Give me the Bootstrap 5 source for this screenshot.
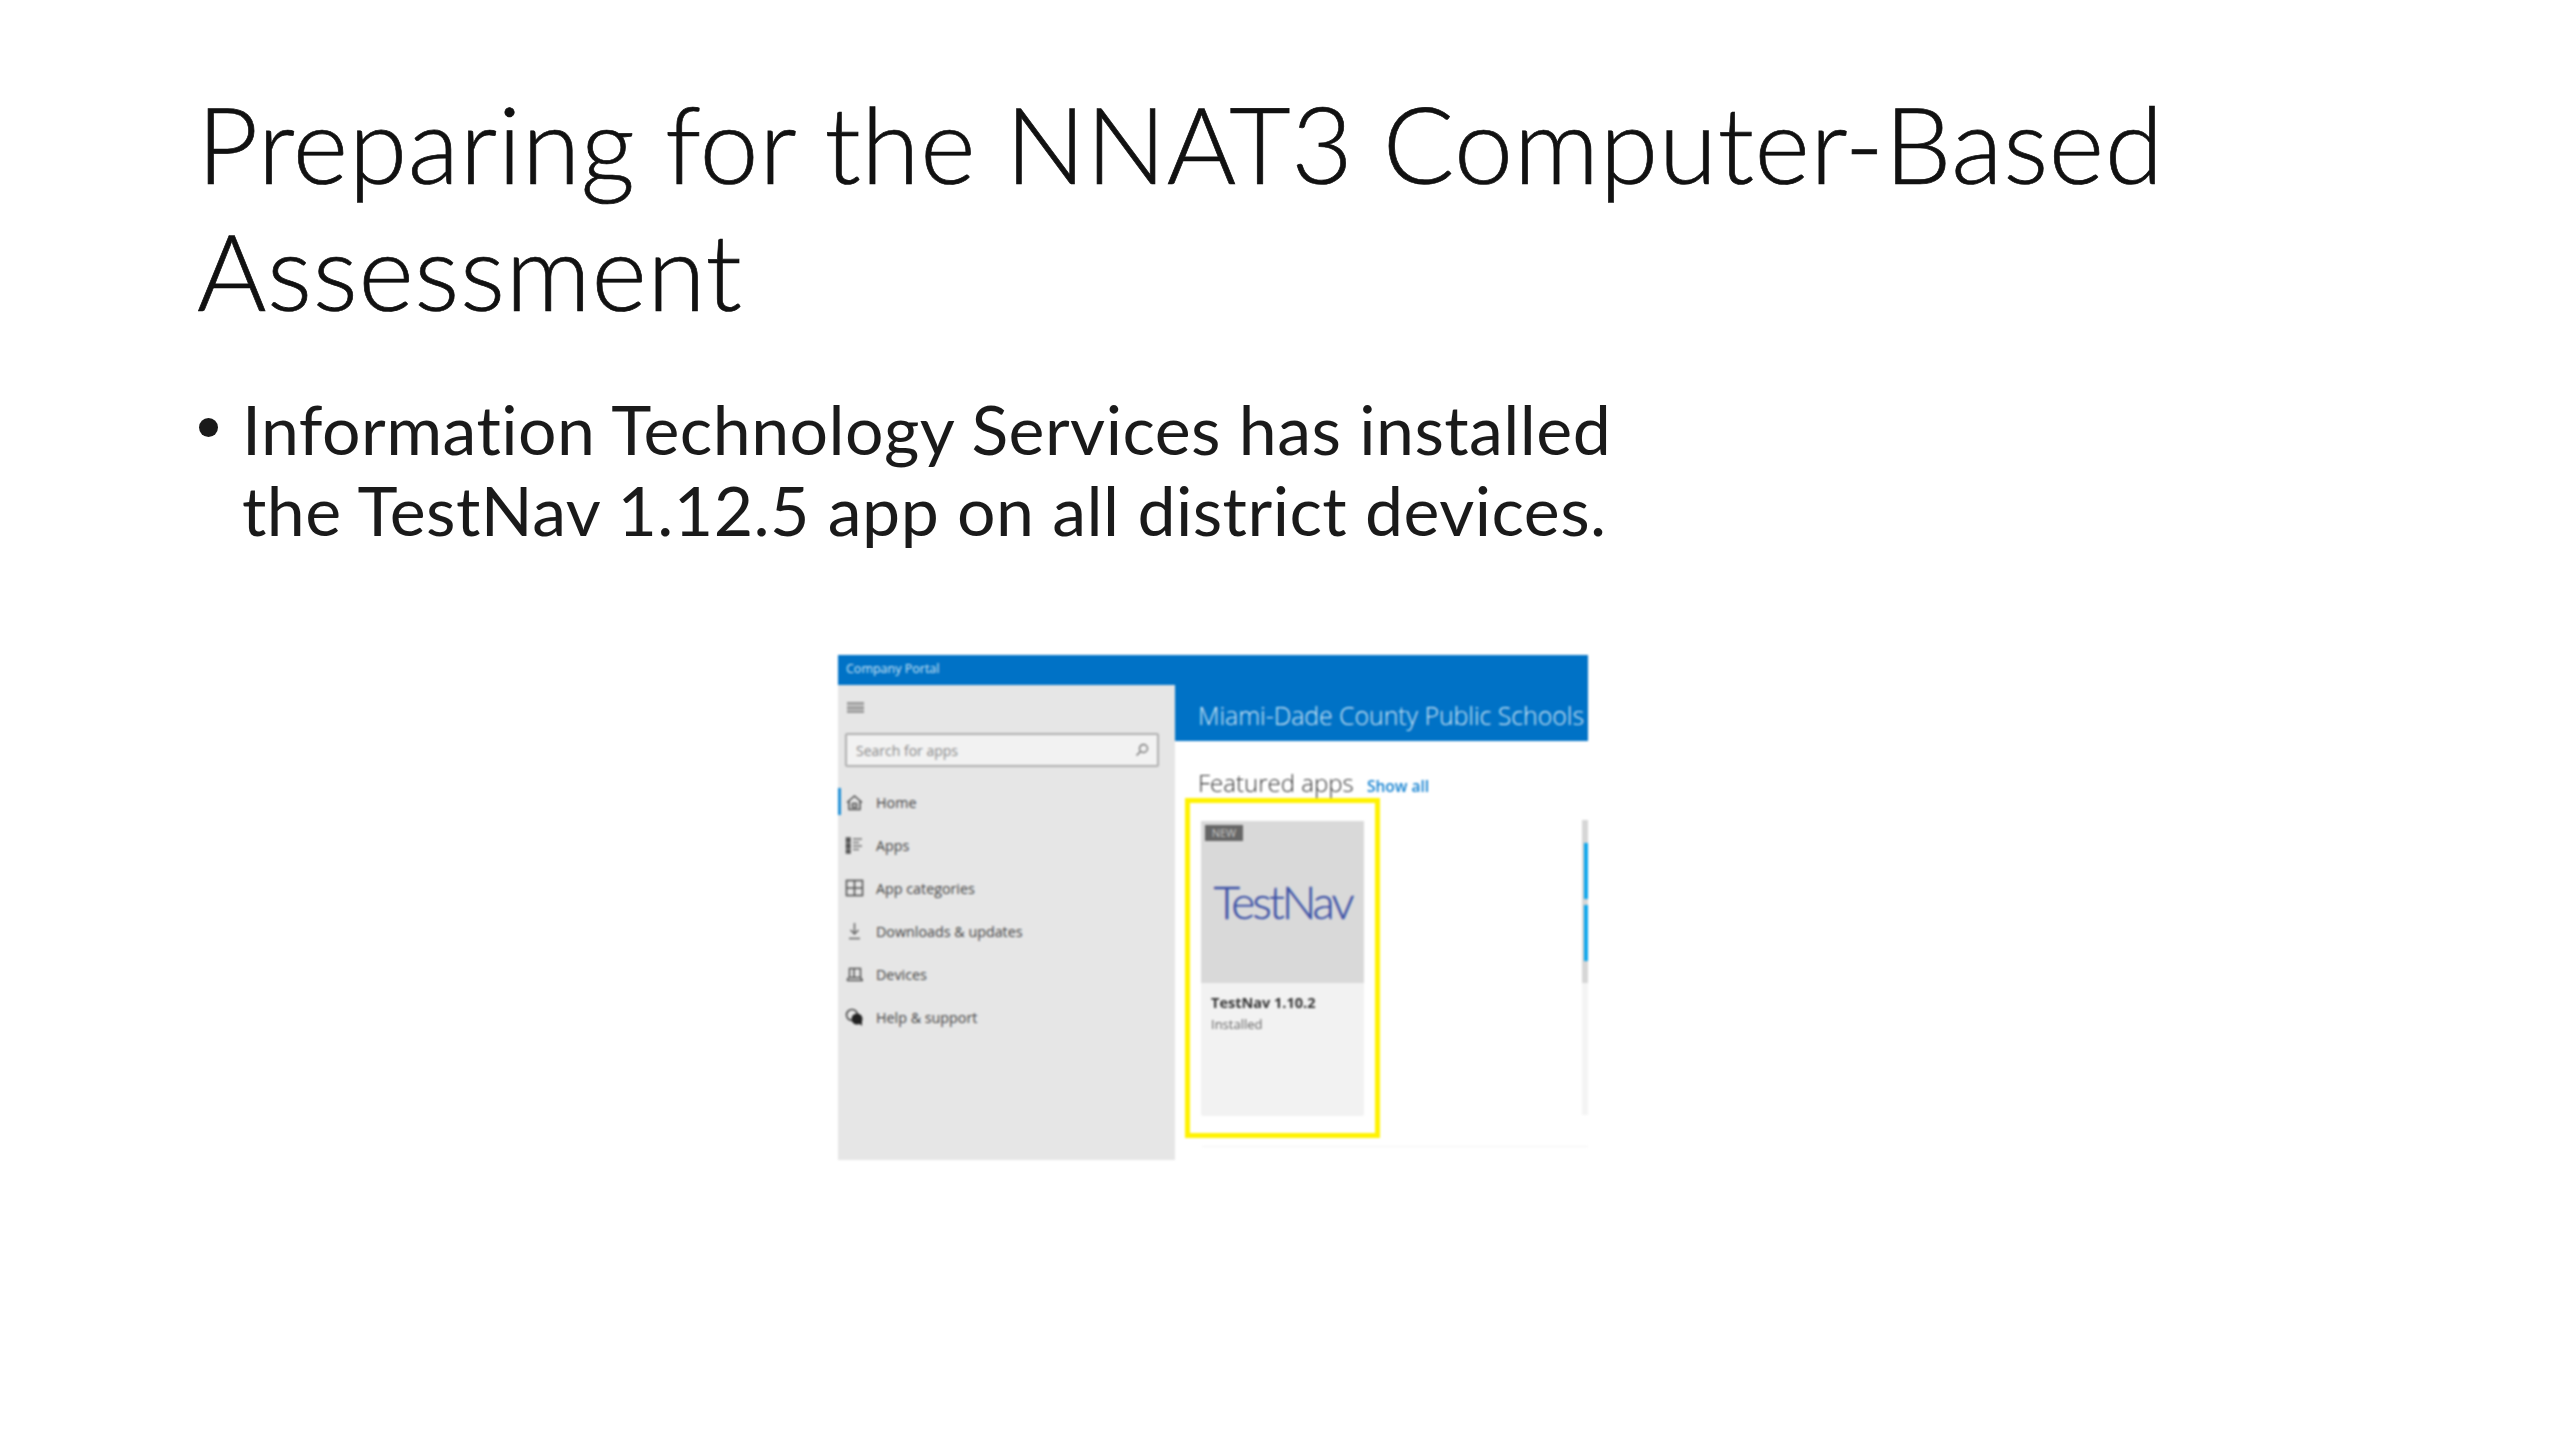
<!DOCTYPE html>
<html lang="en">
<head>
<meta charset="utf-8">
<title>Preparing for the NNAT3 Computer-Based Assessment</title>
<link href="https://cdn.jsdelivr.net/npm/bootstrap@5.3.0/dist/css/bootstrap.min.css" rel="stylesheet">
<style>
html,body{background:#fff;margin:0}
.slide{width:2560px;height:1440px;padding:80px 197px 0;overflow:hidden;color:#111;font-family:Lato,"Liberation Sans",sans-serif}
.slide-title{font-family:Lato,sans-serif;font-weight:300;font-size:106px;line-height:127px;letter-spacing:.6px;margin:0 0 54px;white-space:nowrap;-webkit-text-stroke:.7px #111}
.bullets{font-size:68px;line-height:81px;margin:0;padding:0;list-style:none;white-space:nowrap;letter-spacing:.45px;color:#1a1a1a}
.dot{width:19px;height:19px;border-radius:50%;background:#1a1a1a;margin:30px 0 0 2px;flex:none}
.shot-wrap{margin:105px 0 0 641px}
.shot{width:750px;height:505px;font-family:"Open Sans",sans-serif;filter:blur(.9px);display:flex;flex-direction:column}
.app-bar{height:30px;background:#0072c6;color:#cfe6f7;font-size:12.5px;line-height:28px;padding-left:8px;flex:none}
.panes{flex:1;display:flex;min-height:0}
.side{width:337px;background:#e6e6e6;padding:17px 7px 0;flex:none;position:relative}
.burger{width:17px;height:11px;margin-left:2px;border-top:2px solid #999;border-bottom:2px solid #999;position:relative;display:block;background:#bdbdbd}
.burger::after{content:"";position:absolute;left:0;right:0;top:2.5px;height:2px;background:#999}
.searchbox{height:34px;margin-top:20px;width:314px;background:#f2f2f2;border:2px solid #b0b0b0;border-radius:2px;color:#8a8a8a;font-size:14px;display:flex;align-items:center;justify-content:space-between;padding:0 8px 0 9px}
.nav-rows{margin:14px 0 0;padding:0;list-style:none}
.nav-rows li{height:43px;display:flex;align-items:center;gap:12px;font-size:14.3px;color:#444}
.nav-rows svg{width:19px;height:19px;flex:none}
.accent{position:absolute;left:0;top:103px;width:3px;height:27px;background:#1f8fd6}
.content{flex:1;min-width:0;display:flex;flex-direction:column}
.banner{height:56px;background:#0072c6;color:#d5e9f8;font-size:24.8px;padding-top:7px;padding-left:23px;white-space:nowrap;overflow:hidden;flex:none;font-weight:300;line-height:46px}
.feat{padding:27px 0 0 23px;height:57px;font-size:24px;line-height:30px;color:#333;font-weight:300;white-space:nowrap;flex:none}
.feat a{color:#0f7fd0;font-size:15.5px;font-weight:600;text-decoration:none;margin-left:7px}
.tiles{display:flex;justify-content:space-between;align-items:flex-start;padding-left:10px}
.hilite{width:195px;height:340px;border:5px solid #fff200;padding:18px 11px 0 11px;flex:none}
.tile{height:295px;background:#f2f2f2;border-radius:2px}
.tile-art{height:162px;background:#d9d9d9;position:relative;display:flex;align-items:center;justify-content:center}
.new-tag{position:absolute;left:4px;top:4px;width:38px;height:16px;background:#666;color:#c8c8c8;font-size:11px;line-height:16px;text-align:center}
.logo{font-family:Lato,sans-serif;font-weight:300;color:#3b50a6;font-size:46px;letter-spacing:-3px;line-height:1;-webkit-text-stroke:.4px #3b50a6}
.tile-name{font-size:14.5px;font-weight:700;color:#333;padding:10px 0 0 10px;line-height:20px}
.tile-sub{font-size:13px;color:#666;padding:2px 0 0 10px;line-height:18px}
.strip{width:6px;height:295px;margin-top:22px;background:#f4f4f4;position:relative;flex:none}
.strip i{display:block;background:#d6d6d6;height:163px;position:relative}
.strip b{position:absolute;left:2px;width:4px;background:#0ea6ec}
.strip .s1{top:23px;height:56px}.strip .s2{top:85px;height:56px}
.rule{height:1px;background:#f3f3f3;margin:8px 0 0 27px}
</style>
</head>
<body>
<main class="slide">
<h1 class="slide-title">Preparing for the NNAT3 Computer-Based<br>Assessment</h1>
<ul class="bullets"><li class="d-flex gap-4"><span class="dot"></span><span>Information Technology Services has installed<br>the TestNav 1.12.5 app on all district devices.</span></li></ul>
<div class="shot-wrap">
<section class="shot">
<div class="app-bar">Company Portal</div>
<div class="panes">
<aside class="side">
<span class="accent"></span>
<span class="burger"></span>
<div class="searchbox"><span>Search for apps</span><svg width="14" height="14" viewBox="0 0 14 14" fill="none" stroke="#777" stroke-width="1.4"><circle cx="8.5" cy="5.5" r="4"/><path d="M5.5 8.5 1.5 12.5"/></svg></div>
<ul class="nav-rows">
<li><svg viewBox="0 0 19 19" fill="none" stroke="#555" stroke-width="1.6"><path d="M2 9.5 9.5 3 17 9.5M4 8v8.5h11V8"/><rect x="7.5" y="10.5" width="4" height="4"/></svg>Home</li>
<li><svg viewBox="0 0 19 19" fill="none" stroke="#555" stroke-width="1.5"><path d="M8 3h9M8 6.5h6M8 10h9M8 13.5h6" stroke="#777"/><rect x="1.5" y="2" width="3.5" height="4" fill="#555"/><rect x="1.5" y="8" width="3.5" height="4" fill="#555"/><rect x="1.5" y="14" width="3.5" height="3" fill="#555"/></svg>Apps</li>
<li><svg viewBox="0 0 19 19" fill="none" stroke="#555" stroke-width="1.6"><rect x="1.5" y="1.5" width="16" height="15"/><path d="M9.5 1.5v15M1.5 9h16"/></svg>App categories</li>
<li><svg viewBox="0 0 19 19" fill="none" stroke="#666" stroke-width="1.5"><path d="M9.5 1v10M5.5 8l4 4 4-4M4 16.5h11"/></svg>Downloads &amp; updates</li>
<li><svg viewBox="0 0 19 19" fill="none" stroke="#555" stroke-width="1.5"><path d="M4.5 3.5h11v9h-11zM2 15.5h16M3.5 12.5 2 15.5M15.5 12.5 17.5 15.5M9 4v8"/></svg>Devices</li>
<li><svg viewBox="0 0 19 19"><circle cx="7" cy="7" r="5.5" fill="none" stroke="#444" stroke-width="1.5"/><circle cx="12" cy="11" r="5.5" fill="#222"/><path d="M14 15l3 3v-5z" fill="#222"/></svg>Help &amp; support</li>
</ul>
</aside>
<div class="content">
<div class="banner">Miami-Dade County Public Schools</div>
<div class="feat">Featured apps <a href="#">Show all</a></div>
<div class="tiles">
<div class="hilite"><div class="tile">
<div class="tile-art"><span class="new-tag">NEW</span><span class="logo">TestNav</span></div>
<div class="tile-name">TestNav 1.10.2</div>
<div class="tile-sub">Installed</div>
</div></div>
<div class="strip"><i></i><b class="s1"></b><b class="s2"></b></div>
</div>
<div class="rule"></div>
</div>
</div>
</section>
</div>
</main>
<script src="https://cdn.jsdelivr.net/npm/bootstrap@5.3.0/dist/js/bootstrap.bundle.min.js"></script>
</body>
</html>
